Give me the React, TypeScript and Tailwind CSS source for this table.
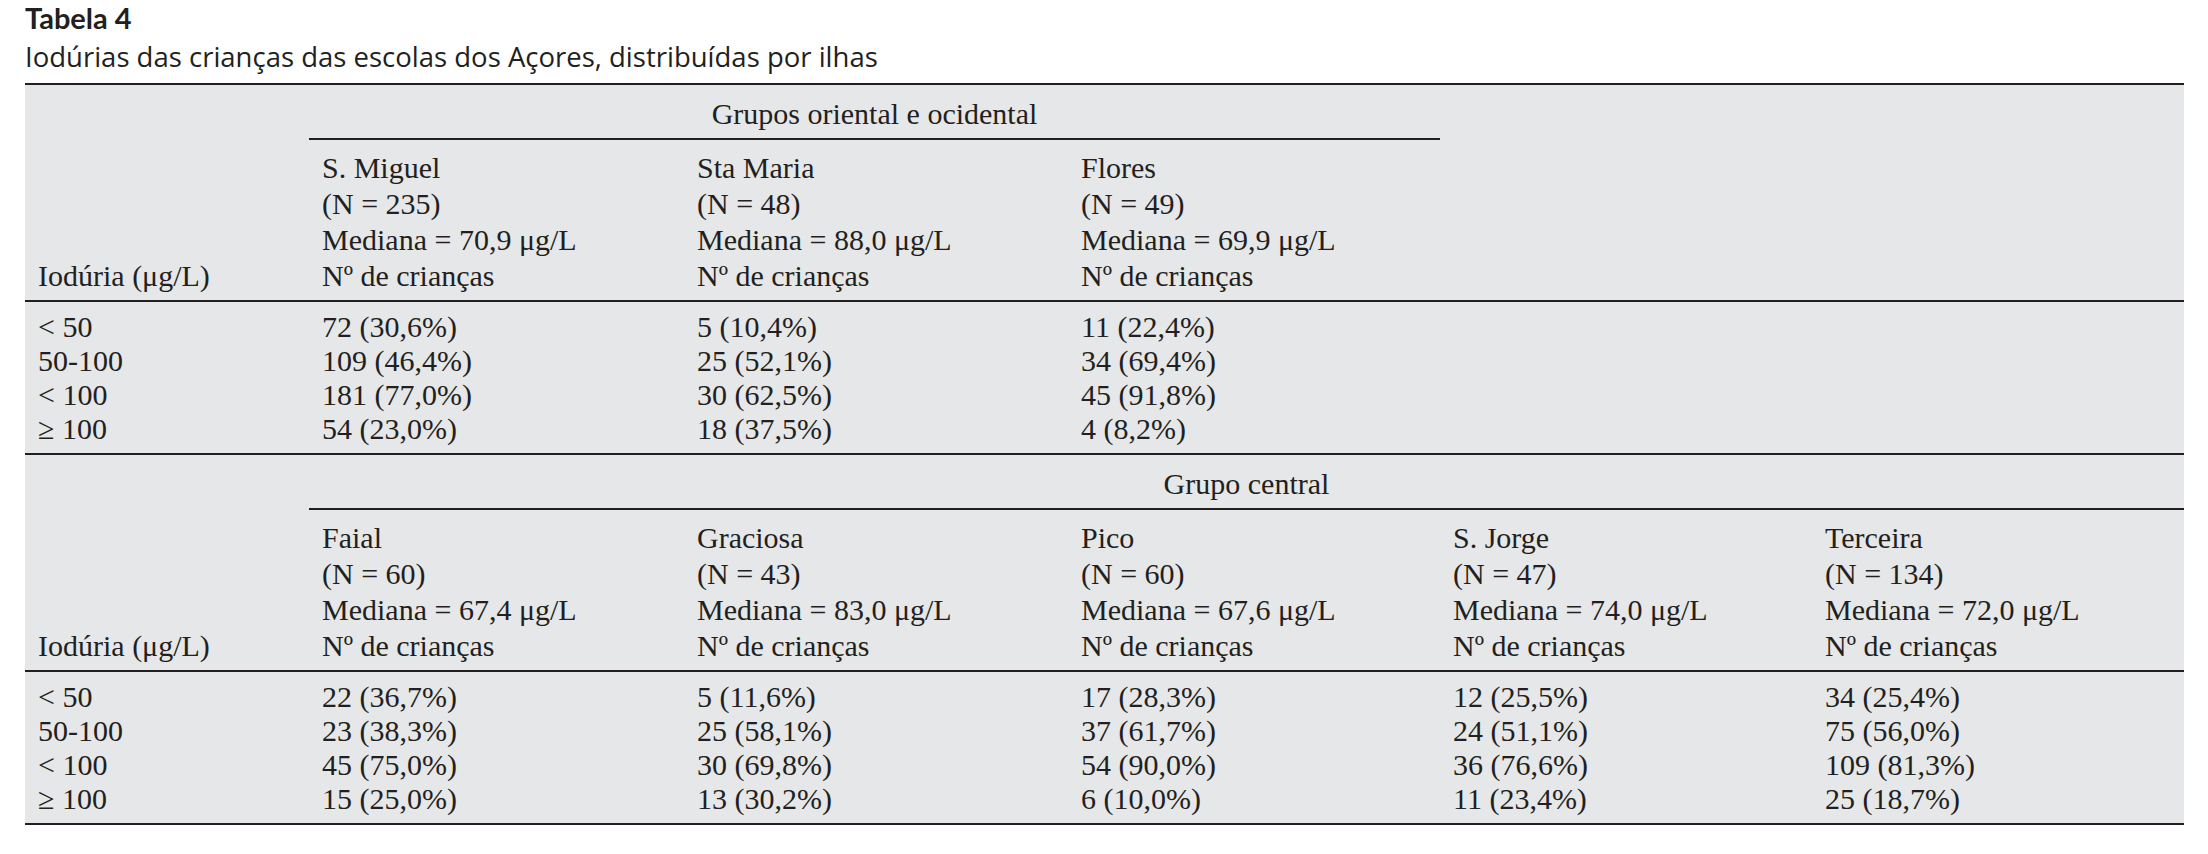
type Island = {
  name: string;
  n: number;
  median: string;
  values: string[];
};

type Group = {
  title: string;
  islands: Island[];
};

const LABELS = ["< 50", "50-100", "< 100", "≥ 100"];

const GROUPS: Group[] = [
  {
    title: "Grupos oriental e ocidental",
    islands: [
      { name: "S. Miguel", n: 235, median: "70,9", values: ["72 (30,6%)", "109 (46,4%)", "181 (77,0%)", "54 (23,0%)"] },
      { name: "Sta Maria", n: 48, median: "88,0", values: ["5 (10,4%)", "25 (52,1%)", "30 (62,5%)", "18 (37,5%)"] },
      { name: "Flores", n: 49, median: "69,9", values: ["11 (22,4%)", "34 (69,4%)", "45 (91,8%)", "4 (8,2%)"] },
    ],
  },
  {
    title: "Grupo central",
    islands: [
      { name: "Faial", n: 60, median: "67,4", values: ["22 (36,7%)", "23 (38,3%)", "45 (75,0%)", "15 (25,0%)"] },
      { name: "Graciosa", n: 43, median: "83,0", values: ["5 (11,6%)", "25 (58,1%)", "30 (69,8%)", "13 (30,2%)"] },
      { name: "Pico", n: 60, median: "67,6", values: ["17 (28,3%)", "37 (61,7%)", "54 (90,0%)", "6 (10,0%)"] },
      { name: "S. Jorge", n: 47, median: "74,0", values: ["12 (25,5%)", "24 (51,1%)", "36 (76,6%)", "11 (23,4%)"] },
      { name: "Terceira", n: 134, median: "72,0", values: ["34 (25,4%)", "75 (56,0%)", "109 (81,3%)", "25 (18,7%)"] },
    ],
  },
];

const GRID = "grid grid-cols-[284px_375px_384px_372px_372px_372px]";

function GroupSection({ group }: { group: Group }) {
  const span = group.islands.length === 3 ? "w-[1131px]" : "w-[1875px]";

  return (
    <section className="border-t-2 border-[#231f20]">
      {/* group heading with its underline */}
      <div className="flex">
        <div className="w-[284px] shrink-0" />
        <div className={`${span} border-b-2 border-[#231f20] pt-[11px] pb-[7px] text-center leading-[35px]`}>
          {group.title}
        </div>
      </div>

      {/* column headers */}
      <div className={`${GRID} pt-[10px] pb-[6px] leading-[36px]`}>
        <div className="self-end pl-[13px]">Iodúria (μg/L)</div>
        {group.islands.map((isl) => (
          <div key={isl.name} className="pl-[13px]">
            <div>{isl.name}</div>
            <div>(N = {isl.n})</div>
            <div>Mediana = {isl.median} μg/L</div>
            <div>Nº de crianças</div>
          </div>
        ))}
      </div>

      {/* data rows */}
      <div className={`${GRID} border-t-2 border-[#231f20] pt-2 pb-[7px] leading-[34px]`}>
        {LABELS.map((label, r) => (
          <div key={label} className="contents">
            <div className="pl-[13px]">{label}</div>
            {group.islands.map((isl) => (
              <div key={isl.name} className="pl-[13px]">
                {isl.values[r]}
              </div>
            ))}
            {group.islands.length === 3 && (
              <>
                <div />
                <div />
              </>
            )}
          </div>
        ))}
      </div>
    </section>
  );
}

export default function App() {
  return (
    <div className="min-h-[854px] w-[2208px] bg-white px-[25px] pt-[2px] text-[#231f20]">
      <h1 className="font-['Lato',sans-serif] text-[29px] font-bold leading-[32px]">
        Tabela 4
      </h1>
      <p className="mt-[6px] mb-[9px] font-['Open_Sans',sans-serif] text-[27.5px] leading-[34px]">
        Iodúrias das crianças das escolas dos Açores, distribuídas por ilhas
      </p>

      <div className="w-[2159px] border-b-2 border-[#231f20] bg-[#e6e7e8] font-['Liberation_Serif','Times_New_Roman',serif] text-[30px]">
        {GROUPS.map((g) => (
          <GroupSection key={g.title} group={g} />
        ))}
      </div>
    </div>
  );
}
